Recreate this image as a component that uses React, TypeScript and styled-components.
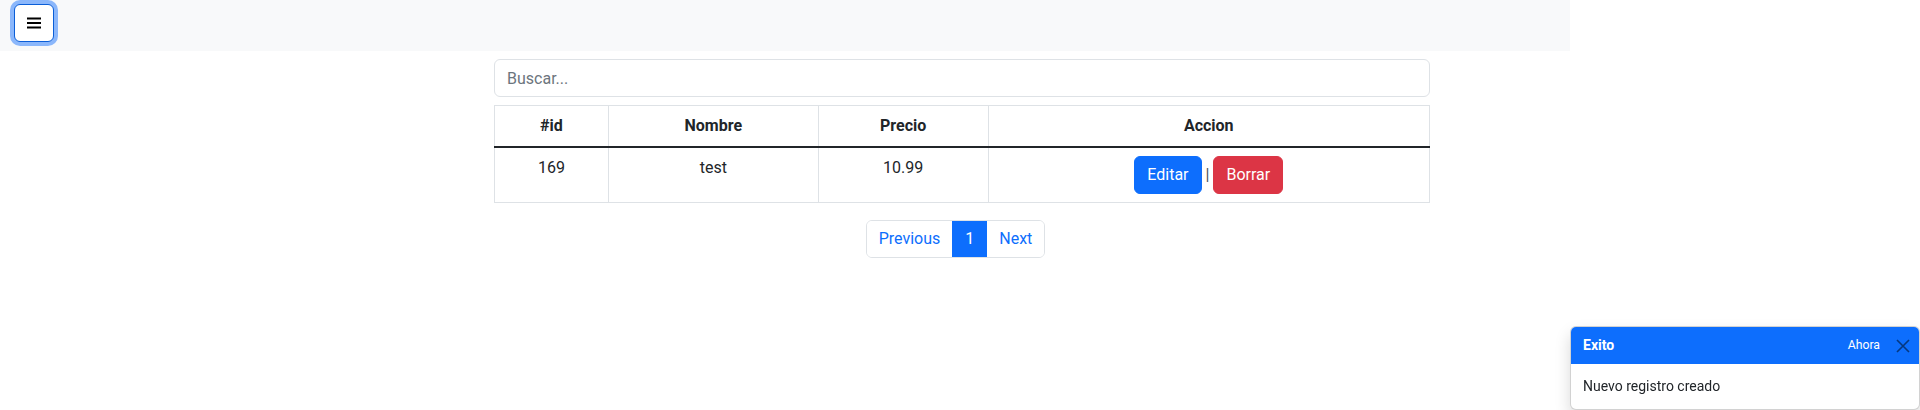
import React from "react";
import styled, { createGlobalStyle } from "styled-components";

const Global = createGlobalStyle`
  * { box-sizing: border-box; }
  html, body { margin: 0; padding: 0; background: #fff; }
  body {
    font-family: "Segoe UI", Roboto, "Liberation Sans", sans-serif;
    font-size: 16px;
    line-height: 1.5;
    color: #212529;
  }
`;

const Navbar = styled.nav`
  width: 1570px;
  height: 51px;
  background: #f8f9fa;
  padding: 4px 0 0 14px;
`;

const Toggler = styled.button`
  width: 40px;
  height: 38px;
  background: #fff;
  border: 1px solid #0b5ed7;
  border-radius: 6px;
  box-shadow: 0 0 0 4px #8bb7fb;
  display: flex;
  align-items: center;
  justify-content: center;
  padding: 0;
`;

const Main = styled.main`
  display: grid;
  grid-template-columns: 494px 936px 1fr;
  padding-top: 8px;
`;

const Column = styled.div`
  grid-column: 2;
`;

const Search = styled.input`
  display: block;
  width: 100%;
  height: 38px;
  padding: 6px 12px;
  font: inherit;
  color: #212529;
  border: 1px solid #dee2e6;
  border-radius: 6px;
  margin-bottom: 8px;
  outline: none;
  &::placeholder { color: #6c757d; opacity: 1; }
`;

const Table = styled.table`
  width: 100%;
  border-collapse: collapse;
  margin-bottom: 17px;
  text-align: center;
  color: #212529;
`;

const Th = styled.th<{ $w: number }>`
  width: ${(p) => p.$w}px;
  padding: 8px;
  font-weight: 700;
  border: 1px solid #dee2e6;
  vertical-align: bottom;
`;

const HeadRow = styled.tr`
  border-bottom: 2px solid #212529;
`;

const Td = styled.td`
  padding: 8px;
  border: 1px solid #dee2e6;
  vertical-align: top;
`;

const Btn = styled.button<{ $variant: "primary" | "danger" }>`
  font: inherit;
  line-height: 24px;
  padding: 6px 12px;
  border-radius: 6px;
  border: 1px solid ${(p) => (p.$variant === "primary" ? "#0d6efd" : "#dc3545")};
  background: ${(p) => (p.$variant === "primary" ? "#0d6efd" : "#dc3545")};
  color: #fff;
  vertical-align: middle;
`;

const Sep = styled.span`
  display: inline-block;
  margin: 0 4px;
  vertical-align: middle;
  color: #495057;
`;

const PagerWrap = styled.nav`
  display: flex;
  justify-content: center;
  padding-right: 13px;
`;

const Pager = styled.ul`
  list-style: none;
  margin: 0;
  padding: 0;
  display: flex;
  border: 1px solid #dee2e6;
  border-radius: 6px;
  overflow: hidden;
`;

const PageLink = styled.li<{ $active?: boolean }>`
  padding: 6px 12px;
  line-height: 24px;
  color: ${(p) => (p.$active ? "#fff" : "#0d6efd")};
  background: ${(p) => (p.$active ? "#0d6efd" : "#fff")};
  & + & { border-left: 1px solid ${(p) => (p.$active ? "#0d6efd" : "#dee2e6")}; }
`;

const Toast = styled.div`
  position: fixed;
  top: 326px;
  right: 0;
  width: 350px;
  font-size: 14px;
  background: #fff;
  border: 1px solid rgba(0, 0, 0, 0.175);
  border-radius: 6px;
  box-shadow: 0 8px 16px rgba(0, 0, 0, 0.15);
  overflow: hidden;
`;

const ToastHeader = styled.div`
  display: flex;
  align-items: center;
  height: 37px;
  padding: 8px 12px;
  background: #0d6efd;
  color: #fff;
`;

const ToastTitle = styled.strong`
  margin-right: auto;
  font-weight: 700;
`;

const ToastTime = styled.small`
  font-size: 12.25px;
`;

const Close = styled.button`
  width: 21px;
  height: 21px;
  padding: 3.5px;
  margin: 0 -6px 0 12px;
  background: transparent;
  border: 0;
  display: flex;
  align-items: center;
  justify-content: center;
`;

const ToastBody = styled.div`
  padding: 12px;
  color: #212529;
`;

export default function App() {
  return (
    <>
      <Global />
      <Navbar>
        <Toggler aria-label="menu">
          <svg width="14" height="14" viewBox="0 0 14 14">
            <rect x="0" y="1.5" width="14" height="2" fill="#000" />
            <rect x="0" y="6" width="14" height="2" fill="#000" />
            <rect x="0" y="10.5" width="14" height="2" fill="#000" />
          </svg>
        </Toggler>
      </Navbar>
      <Main>
        <Column>
          <Search placeholder="Buscar..." />
          <Table>
            <thead>
              <HeadRow>
                <Th $w={114}>#id</Th>
                <Th $w={210}>Nombre</Th>
                <Th $w={170}>Precio</Th>
                <Th $w={442}>Accion</Th>
              </HeadRow>
            </thead>
            <tbody>
              <tr>
                <Td>169</Td>
                <Td>test</Td>
                <Td>10.99</Td>
                <Td>
                  <Btn $variant="primary">Editar</Btn>
                  <Sep>|</Sep>
                  <Btn $variant="danger">Borrar</Btn>
                </Td>
              </tr>
            </tbody>
          </Table>
          <PagerWrap>
            <Pager>
              <PageLink>Previous</PageLink>
              <PageLink $active>1</PageLink>
              <PageLink>Next</PageLink>
            </Pager>
          </PagerWrap>
        </Column>
      </Main>
      <Toast>
        <ToastHeader>
          <ToastTitle>Exito</ToastTitle>
          <ToastTime>Ahora</ToastTime>
          <Close aria-label="Close">
            <svg width="14" height="14" viewBox="0 0 14 14">
              <path d="M1 1 L13 13 M13 1 L1 13" stroke="#06377e" strokeWidth="1.6" />
            </svg>
          </Close>
        </ToastHeader>
        <ToastBody>Nuevo registro creado</ToastBody>
      </Toast>
    </>
  );
}
